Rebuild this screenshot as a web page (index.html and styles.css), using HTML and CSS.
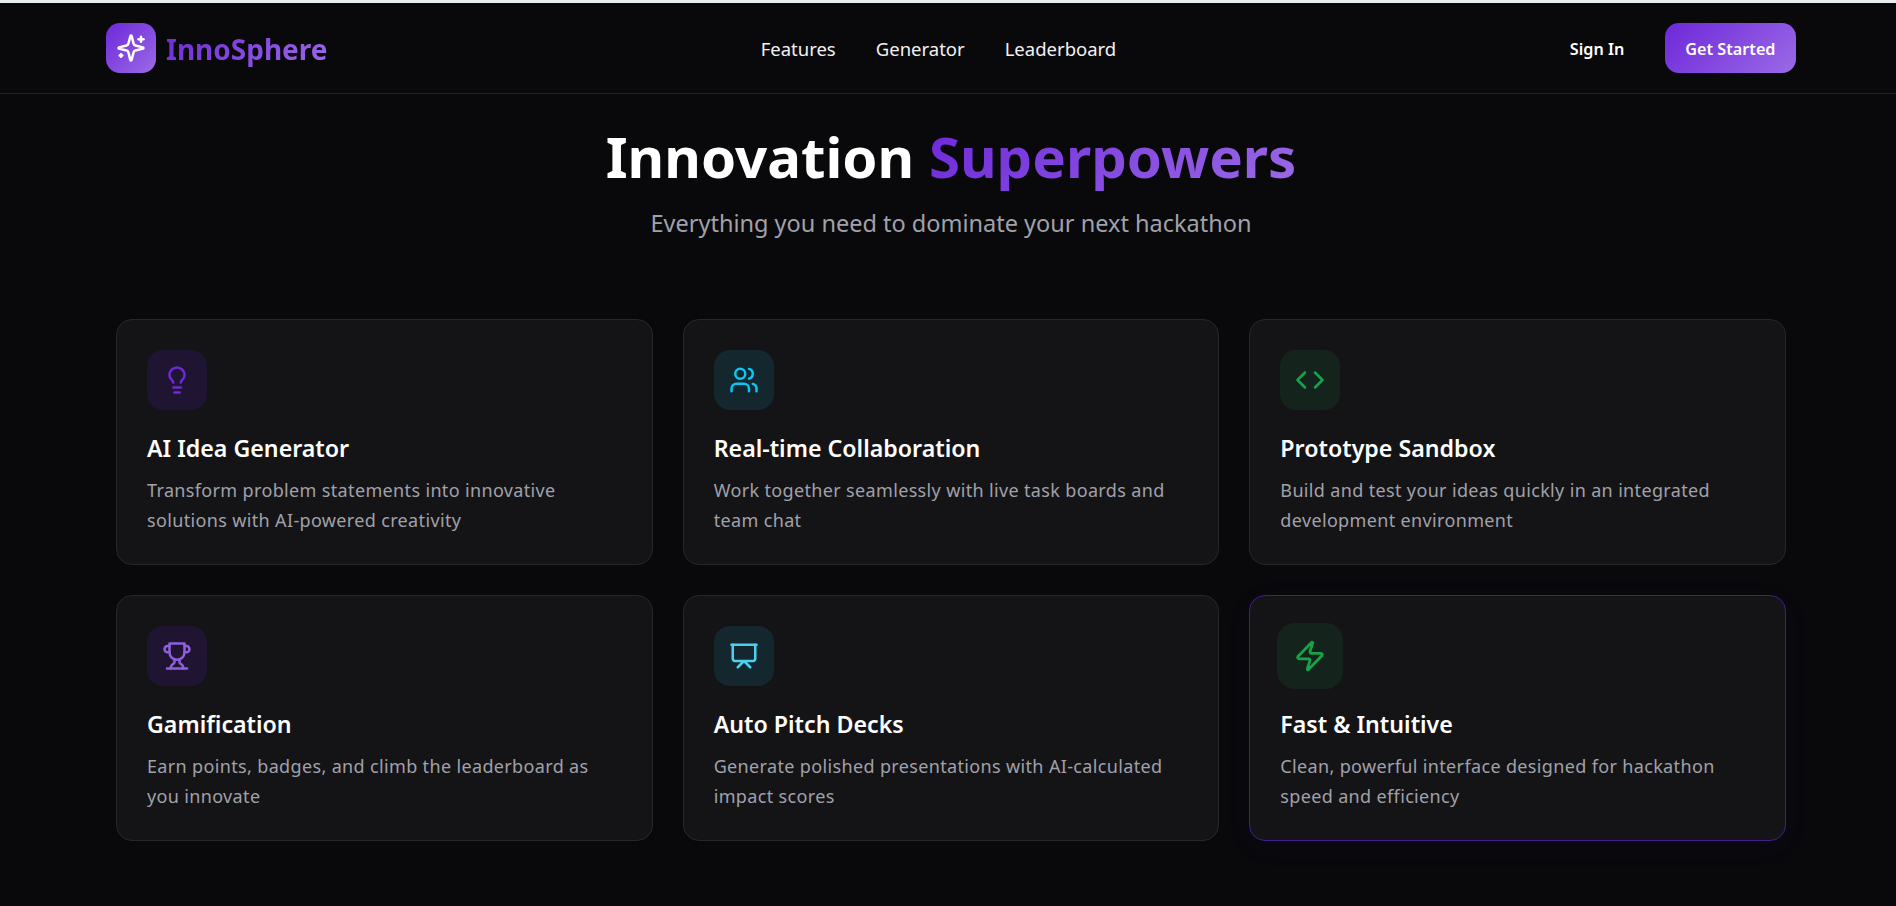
FILE: index.html
```html
<!DOCTYPE html>
<html lang="en">
<head>
  <meta charset="UTF-8" />
  <meta name="viewport" content="width=device-width, initial-scale=1.0" />
  <title>InnoSphere</title>
  <link rel="stylesheet" href="styles.css">
</head>
<body>
  <header class="navbar">
    <a class="logo" href="#">
      <span class="logo-icon">
        <svg class="icon" width="30" height="30" viewBox="0 0 24 24">
          <path d="M9.937 15.5A2 2 0 0 0 8.5 14.063l-6.135-1.582a.5.5 0 0 1 0-.962L8.5 9.936A2 2 0 0 0 9.937 8.5l1.582-6.135a.5.5 0 0 1 .963 0L14.063 8.5A2 2 0 0 0 15.5 9.937l6.135 1.581a.5.5 0 0 1 0 .964L15.5 14.063a2 2 0 0 0-1.437 1.437l-1.582 6.135a.5.5 0 0 1-.963 0z"/>
          <path d="M20 3v4"/><path d="M22 5h-4"/><path d="M4 17v2"/><path d="M5 18H3"/>
        </svg>
      </span>
      <span class="logo-text gradient-text">InnoSphere</span>
    </a>
    <nav class="nav-links">
      <a href="#">Features</a>
      <a href="#">Generator</a>
      <a href="#">Leaderboard</a>
    </nav>
    <div class="nav-actions">
      <button class="btn-ghost">Sign In</button>
      <button class="btn-primary">Get Started</button>
    </div>
  </header>

  <main class="features">
    <div class="section-head">
      <h1>Innovation <span class="gradient-text">Superpowers</span></h1>
      <p>Everything you need to dominate your next hackathon</p>
    </div>

    <div class="card-grid">
      <article class="card">
        <div class="card-icon purple-dark">
          <svg class="icon" width="30" height="30" viewBox="0 0 24 24">
            <path d="M15 14c.2-1 .7-1.7 1.5-2.5 1-.9 1.5-2.2 1.5-3.5A6 6 0 0 0 6 8c0 1 .2 2.2 1.5 3.5.7.7 1.3 1.5 1.5 2.5"/>
            <path d="M9 18h6"/><path d="M10 22h4"/>
          </svg>
        </div>
        <h3>AI Idea Generator</h3>
        <p>Transform problem statements into innovative solutions with AI-powered creativity</p>
      </article>

      <article class="card">
        <div class="card-icon cyan">
          <svg class="icon" width="30" height="30" viewBox="0 0 24 24">
            <path d="M16 21v-2a4 4 0 0 0-4-4H6a4 4 0 0 0-4 4v2"/>
            <circle cx="9" cy="7" r="4"/>
            <path d="M22 21v-2a4 4 0 0 0-3-3.87"/>
            <path d="M16 3.13a4 4 0 0 1 0 7.75"/>
          </svg>
        </div>
        <h3>Real-time Collaboration</h3>
        <p>Work together seamlessly with live task boards and team chat</p>
      </article>

      <article class="card">
        <div class="card-icon green">
          <svg class="icon" width="30" height="30" viewBox="0 0 24 24">
            <polyline points="16 18 22 12 16 6"/>
            <polyline points="8 6 2 12 8 18"/>
          </svg>
        </div>
        <h3>Prototype Sandbox</h3>
        <p>Build and test your ideas quickly in an integrated development environment</p>
      </article>

      <article class="card">
        <div class="card-icon purple">
          <svg class="icon" width="30" height="30" viewBox="0 0 24 24">
            <path d="M6 9H4.5a2.5 2.5 0 0 1 0-5H6"/>
            <path d="M18 9h1.5a2.5 2.5 0 0 0 0-5H18"/>
            <path d="M4 22h16"/>
            <path d="M10 14.66V17c0 .55-.47.98-.97 1.21C7.85 18.75 7 20.24 7 22"/>
            <path d="M14 14.66V17c0 .55.47.98.97 1.21C16.15 18.75 17 20.24 17 22"/>
            <path d="M18 2H6v7a6 6 0 0 0 12 0V2Z"/>
          </svg>
        </div>
        <h3>Gamification</h3>
        <p>Earn points, badges, and climb the leaderboard as you innovate</p>
      </article>

      <article class="card">
        <div class="card-icon sky">
          <svg class="icon" width="30" height="30" viewBox="0 0 24 24">
            <path d="M2 3h20"/>
            <path d="M21 3v11a2 2 0 0 1-2 2H5a2 2 0 0 1-2-2V3"/>
            <path d="m7 21 5-5 5 5"/>
          </svg>
        </div>
        <h3>Auto Pitch Decks</h3>
        <p>Generate polished presentations with AI-calculated impact scores</p>
      </article>

      <article class="card card-active">
        <div class="card-icon green">
          <svg class="icon" width="30" height="30" viewBox="0 0 24 24">
            <path d="M4 14a1 1 0 0 1-.78-1.63l9.9-10.2a.5.5 0 0 1 .86.46l-1.92 6.02A1 1 0 0 0 13 10h7a1 1 0 0 1 .78 1.63l-9.9 10.2a.5.5 0 0 1-.86-.46l1.92-6.02A1 1 0 0 0 11 14z"/>
          </svg>
        </div>
        <h3>Fast &amp; Intuitive</h3>
        <p>Clean, powerful interface designed for hackathon speed and efficiency</p>
      </article>
    </div>
  </main>
</body>
</html>
```

FILE: styles.css
```css
* {
  box-sizing: border-box;
}
body {
  margin: 0;
  min-height: 906px;
  border-top: 3px solid #e8efec;
  background: #09090c;
  color: #fff;
  font-family: 'Noto Sans', 'Open Sans', sans-serif;
}
a {
  color: inherit;
  text-decoration: none;
}
.icon {
  display: block;
  fill: none;
  stroke: currentColor;
  stroke-width: 2;
  stroke-linecap: round;
  stroke-linejoin: round;
}
.gradient-text {
  background: linear-gradient(135deg, #6d28d9, #9b6ae6);
  -webkit-background-clip: text;
  background-clip: text;
  color: transparent;
}

.navbar {
  display: flex;
  align-items: center;
  justify-content: space-between;
  height: 91px;
  padding: 0 100px 0 106px;
  border-bottom: 1px solid #222226;
}
.logo {
  display: flex;
  align-items: center;
  gap: 10px;
}
.logo-icon {
  display: flex;
  align-items: center;
  justify-content: center;
  width: 50px;
  height: 50px;
  border-radius: 14px;
  background: linear-gradient(135deg, #6d28d9, #9b6ae6);
  color: #fff;
}
.logo-text {
  padding-top: 1px;
  font-size: 28px;
  font-weight: 700;
}
.nav-links {
  display: flex;
  gap: 40px;
  padding-top: 1px;
  font-size: 18.5px;
  color: #f2f2f2;
}
.nav-actions {
  display: flex;
  align-items: center;
  gap: 20px;
}
.nav-actions button {
  height: 50px;
  padding: 2px 20.5px 0;
  border: none;
  border-radius: 14px;
  color: #fff;
  font-family: inherit;
  font-size: 16.2px;
  font-weight: 600;
}
.btn-ghost {
  background: none;
}
.btn-primary {
  background: linear-gradient(135deg, #6d28d9, #9b6ae6);
}

.features {
  padding: 25px 110px 0 116px;
}
.section-head {
  margin-bottom: 78px;
  text-align: center;
}
.section-head h1 {
  margin: 0 0 10px;
  font-size: 56.4px;
  font-weight: 700;
  line-height: 76px;
}
.section-head p {
  margin: 0;
  font-size: 23.5px;
  line-height: 36px;
  color: #a1a1aa;
}
.card-grid {
  display: grid;
  grid-template-columns: repeat(3, 1fr);
  gap: 30px;
}
.card {
  height: 246px;
  padding: 30px;
  border: 1px solid #27272a;
  border-radius: 16px;
  background: #141417;
}
.card h3 {
  margin: 22px 0 11px;
  font-size: 23.2px;
  font-weight: 600;
  line-height: 32px;
}
.card p {
  margin: 0;
  font-size: 18px;
  line-height: 30px;
  letter-spacing: 0.35px;
  color: #a1a1aa;
}
.card-icon {
  display: flex;
  align-items: center;
  justify-content: center;
  width: 60px;
  height: 60px;
  border-radius: 16px;
}
.purple-dark {
  background: #201433;
  color: #6d28d9;
}
.purple {
  background: #201433;
  color: #8f5fdc;
}
.cyan {
  background: #14272f;
  color: #06c8f2;
}
.sky {
  background: #14272f;
  color: #4dd0f0;
}
.green {
  background: #14241c;
  color: #16a34a;
}
.card-active {
  border-color: #461c8c;
  box-shadow: 0 6px 32px rgba(109, 40, 217, 0.04);
}
.card-active .card-icon {
  transform: scale(1.1);
}
```
